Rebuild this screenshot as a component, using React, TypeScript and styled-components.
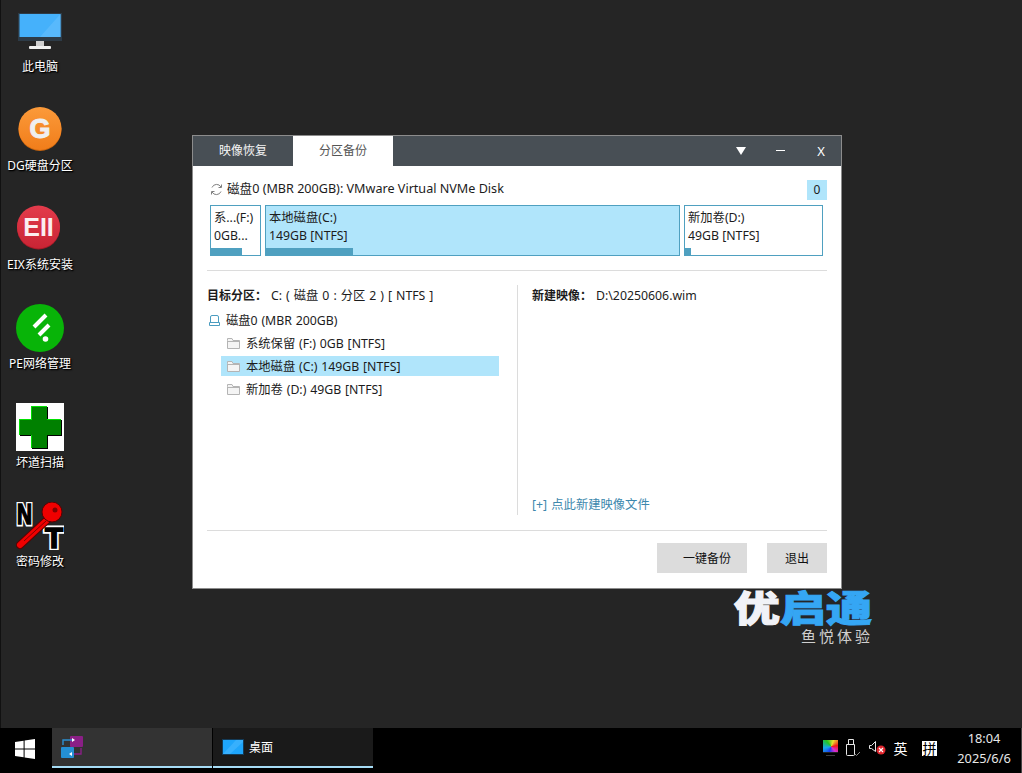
import React from 'react'
import styled, { createGlobalStyle } from 'styled-components'

const GlobalStyle = createGlobalStyle`
  html, body {
    margin: 0;
    padding: 0;
    height: 100%;
    overflow: hidden;
    background: #252525;
    font-family: "Noto Sans", "Noto Sans CJK SC", sans-serif;
    font-size: 12.3px;
  }
`

const Screen = styled.div`
  width: 1022px;
  height: 773px;
  display: flex;
  flex-direction: column;
  box-sizing: border-box;
  border-left: 1px solid #111;
`

const Desktop = styled.div`
  position: relative;
  flex: 1;
  display: flex;
  flex-direction: column;
  padding-top: 7px;
`

const Shortcut = styled.div`
  width: 80px;
  height: 99px;
  margin-left: -1px;
  display: flex;
  flex-direction: column;
  align-items: center;
`

const ShortcutIcon = styled.div`
  width: 48px;
  height: 48px;
  margin-bottom: 3px;
  svg {
    display: block;
  }
`

const ShortcutLabel = styled.div`
  height: 18px;
  line-height: 18px;
  padding: 0 2px;
  color: #fff;
  font-size: 12px;
  white-space: nowrap;
  text-shadow: 1px 1px 2px #000, 1px 1px 1px #000;
`

const Brand = styled.div`
  position: absolute;
  left: 719px;
  top: 588px;
  width: 152px;
  text-align: right;
`

const BrandName = styled.div`
  font-family: "Noto Sans CJK SC", sans-serif;
  font-weight: 900;
  font-size: 36px;
  line-height: 36px;
  color: #f1f2f7;
  white-space: nowrap;
  -webkit-text-stroke: 1px currentColor;
  transform: scaleX(1.28);
  transform-origin: right top;
  span {
    color: #35a6f4;
  }
`

const BrandSlogan = styled.div`
  font-family: "Noto Sans CJK SC", sans-serif;
  font-size: 15px;
  line-height: 20px;
  letter-spacing: 3px;
  margin-top: 2px;
  margin-right: -1px;
  color: #cfcfcf;
`

const Window = styled.div`
  position: absolute;
  left: 191px;
  top: 135px;
  width: 650px;
  height: 454px;
  box-sizing: border-box;
  border: 1px solid #8c8c8c;
  background: #fff;
  display: flex;
  flex-direction: column;
  color: #1c1c1c;
`

const TitleBar = styled.div`
  height: 30px;
  flex: none;
  background: #484f55;
  display: flex;
  align-items: stretch;
`

const Tab = styled.div<{ $active?: boolean }>`
  width: 100px;
  display: flex;
  align-items: center;
  justify-content: center;
  padding-bottom: 2px;
  box-sizing: border-box;
  font-size: 12px;
  background: ${(p) => (p.$active ? '#fff' : 'transparent')};
  color: ${(p) => (p.$active ? '#555' : '#f4f4f4')};
`

const WindowControls = styled.div`
  margin-left: auto;
  display: flex;
  color: #fff;
`

const WindowControl = styled.div`
  width: 40px;
  display: flex;
  align-items: center;
  justify-content: center;
  padding-bottom: 1px;
  box-sizing: border-box;
  font-size: 13px;
`

const DropArrow = styled.span`
  width: 0;
  height: 0;
  border-left: 5px solid transparent;
  border-right: 5px solid transparent;
  border-top: 8px solid #fff;
`

const MinimizeBar = styled.span`
  width: 9px;
  height: 1px;
  margin-right: 2px;
  background: #fff;
`

const Content = styled.div`
  flex: 1;
  display: flex;
  flex-direction: column;
  padding: 0 14px 0 14px;
`

const DiskHeader = styled.div`
  height: 39px;
  display: flex;
  align-items: flex-start;
  padding: 15px 0 0 3px;
  box-sizing: border-box;
  font-size: 12.6px;
  line-height: 16px;
`

const RefreshIcon = styled.span`
  width: 13px;
  height: 16px;
  display: flex;
  align-items: center;
  margin-right: 4px;
`

const DiskBadge = styled.div`
  margin-left: auto;
  margin-top: -1px;
  width: 20px;
  height: 20px;
  background: #b0e5fb;
  display: flex;
  align-items: center;
  justify-content: center;
  font-size: 12px;
`

const PartitionRow = styled.div`
  display: flex;
  gap: 4px;
  height: 51px;
  padding-left: 3px;
  margin-right: 4px;
`

const Partition = styled.div<{ $width: number; $selected?: boolean }>`
  position: relative;
  width: ${(p) => p.$width}px;
  box-sizing: border-box;
  border: 1px solid #4fa0c0;
  background: ${(p) => (p.$selected ? '#b0e5fb' : '#fff')};
  padding: 3px 0 0 3px;
  font-size: 12.3px;
  line-height: 18px;
  white-space: nowrap;
  overflow: hidden;
`

const UsageBar = styled.div`
  position: absolute;
  left: 0;
  bottom: 0;
  height: 7px;
  background: #4fa0c0;
`

const Divider = styled.div`
  height: 1px;
  background: #dcdcdc;
  flex: none;
`

const TopDivider = styled(Divider)`
  margin-top: 14px;
`

const Panels = styled.div`
  height: 230px;
  margin-top: 14px;
  margin-bottom: 15px;
  display: flex;
`

const LeftPanel = styled.div`
  width: 310px;
  flex: none;
`

const InfoLine = styled.div`
  height: 20px;
  line-height: 22px;
  font-size: 12.3px;
  word-spacing: 0.8px;
  strong {
    font-weight: 700;
    font-size: 12px;
  }
`

const Tree = styled.div`
  margin-top: 5px;
  display: flex;
  flex-direction: column;
  gap: 3px;
`

const TreeRow = styled.div<{ $selected?: boolean; $child?: boolean }>`
  height: 20px;
  display: flex;
  align-items: center;
  margin-left: ${(p) => (p.$child ? '14px' : '0')};
  width: ${(p) => (p.$child ? '278px' : 'auto')};
  padding-left: ${(p) => (p.$child ? '6px' : '2px')};
  box-sizing: border-box;
  background: ${(p) => (p.$selected ? '#b0e5fb' : 'transparent')};
  font-size: 12.3px;
  word-spacing: 0.6px;
  white-space: nowrap;
  svg {
    flex: none;
    margin-right: 6px;
  }
`

const RightPanel = styled.div`
  flex: 1;
  border-left: 1px solid #dcdcdc;
  padding-left: 14px;
  display: flex;
  flex-direction: column;
  justify-content: space-between;
`

const NewImageLink = styled.div`
  color: #3d88ad;
  font-size: 12.3px;
  word-spacing: 1px;
  line-height: 18px;
  margin-bottom: 1px;
`

const Footer = styled.div`
  display: flex;
  justify-content: flex-end;
  gap: 20px;
  margin-top: 12px;
`

const ActionButton = styled.div<{ $width: number; $indent?: number }>`
  width: ${(p) => p.$width}px;
  height: 30px;
  box-sizing: border-box;
  padding-left: ${(p) => p.$indent ?? 0}px;
  background: #dcdcdc;
  display: flex;
  align-items: center;
  justify-content: center;
  font-size: 12px;
  color: #111;
`

const Taskbar = styled.div`
  height: 45px;
  flex: none;
  margin-left: -1px;
  background: #000;
  display: flex;
  color: #fff;
`

const StartButton = styled.div`
  width: 52px;
  height: 40px;
  display: flex;
  align-items: center;
  justify-content: center;
  padding: 1px 2px 0 0;
  box-sizing: border-box;
`

const TaskItem = styled.div<{ $active?: boolean }>`
  width: 160px;
  height: 40px;
  margin-right: 1px;
  box-sizing: border-box;
  border-bottom: 2px solid #a6dcf5;
  background: ${(p) => (p.$active ? '#333333' : '#1a1a1a')};
  display: flex;
  align-items: center;
  gap: 5px;
  padding-left: ${(p) => (p.$active ? '8px' : '9px')};
  font-size: 12px;
`

const Tray = styled.div`
  margin-left: auto;
  display: flex;
  align-items: center;
  height: 40px;
`

const TrayIcon = styled.div<{ $width: number }>`
  width: ${(p) => p.$width}px;
  height: 24px;
  display: flex;
  align-items: center;
  justify-content: center;
`

const TrayText = styled.div`
  width: 21px;
  text-align: center;
  font-size: 14px;
  font-family: "Noto Sans CJK SC", sans-serif;
`

const MonitorBody = styled.div`
  width: 15px;
  height: 16px;
  display: flex;
  flex-direction: column;
  align-items: center;
`

const MonitorScreen = styled.div`
  width: 15px;
  height: 12px;
  border-bottom: 1px solid #222;
  background: conic-gradient(from 200deg at 55% 55%, #1b3cf0, #18a8e8, #22c422, #e8e030, #f01818, #d72fd0, #1b3cf0);
`

const MonitorStand = styled.div`
  width: 9px;
  height: 1px;
  margin-top: 2px;
  background: #3c3c3c;
`

const Clock = styled.div`
  width: 72px;
  text-align: center;
  font-size: 12.8px;
  line-height: 20px;
  color: #e8e8e8;
  margin-top: -1px;
`

const TrayEdge = styled.div`
  width: 1px;
  height: 45px;
  margin-left: 1px;
  margin-top: 5px;
  background: #444;
`

const ImeBox = styled.div`
  width: 15px;
  height: 15px;
  background: #fff;
  color: #000;
  font-size: 14px;
  line-height: 14px;
  text-align: center;
  font-family: "Noto Sans CJK SC", sans-serif;
  overflow: hidden;
`

const MonitorIcon = () => (
  <svg width="48" height="48" viewBox="0 0 48 48">
    <rect x="2" y="6" width="44" height="28" fill="#2d3b47" />
    <rect x="3.5" y="7" width="41" height="23" fill="#45b1fb" />
    <path d="M24 30 L44.5 7 V30 Z" fill="#5cbcfd" opacity="0.8" />
    <rect x="20" y="34" width="8" height="5" fill="#cfcfcf" />
    <rect x="13" y="39" width="22" height="3" rx="1" fill="#f0f0f0" />
  </svg>
)

const OrbG = () => (
  <svg width="48" height="48" viewBox="0 0 48 48">
    <defs>
      <linearGradient id="orbG" x1="0" y1="0" x2="0" y2="1">
        <stop offset="0" stopColor="#fb9a3a" />
        <stop offset="1" stopColor="#f17d1a" />
      </linearGradient>
    </defs>
    <circle cx="24" cy="23.5" r="21.5" fill="#c8650f" />
    <circle cx="24" cy="22.5" r="21.5" fill="url(#orbG)" />
    <text x="24" y="32" textAnchor="middle" fontFamily="Liberation Sans" fontWeight="700" fontSize="27" fill="#efefef" stroke="#efefef" strokeWidth="1">G</text>
  </svg>
)

const OrbEII = () => (
  <svg width="48" height="48" viewBox="0 0 48 48">
    <defs>
      <linearGradient id="orbE" x1="0" y1="0" x2="0" y2="1">
        <stop offset="0" stopColor="#e33b4b" />
        <stop offset="1" stopColor="#c92434" />
      </linearGradient>
    </defs>
    <circle cx="22.5" cy="23" r="21.5" fill="#a51a27" />
    <circle cx="22.5" cy="22" r="21.5" fill="url(#orbE)" />
    <text x="22.5" y="31" textAnchor="middle" fontFamily="Liberation Sans" fontWeight="700" fontSize="25" fill="#fbeef0">EII</text>
  </svg>
)

const OrbNetwork = () => (
  <svg width="48" height="48" viewBox="0 0 48 48">
    <circle cx="24" cy="24" r="24" fill="#08b408" />
    <path d="M18 23 L30 11" stroke="#fff" strokeWidth="4" />
    <path d="M23 31 L33 21" stroke="#fff" strokeWidth="4" />
    <circle cx="29.5" cy="35" r="2.8" fill="#fff" />
  </svg>
)

const crossPath = 'M15 3 H31 V16 H45 V32 H31 V45 H15 V32 H3 V16 H15 Z'

const PlusIcon = () => (
  <svg width="48" height="48" viewBox="0 0 48 48" shapeRendering="crispEdges">
    <rect width="48" height="48" fill="#fff" />
    <path d={crossPath} fill="#000" transform="translate(1 1)" />
    <path d={crossPath} fill="#00e000" />
    <path d="M16 4 H31 V17 H45 V32 H31 V45 H16 V32 H4 V17 H16 Z" fill="#008000" />
  </svg>
)

const KeyIcon = () => (
  <svg width="48" height="48" viewBox="0 0 48 48">
    <text x="1" y="22" textLength="15" lengthAdjust="spacingAndGlyphs" fontFamily="Liberation Sans" fontWeight="700" fontSize="29" fill="#fff" stroke="#fff" strokeWidth="5">N</text>
    <text x="1" y="22" textLength="15" lengthAdjust="spacingAndGlyphs" fontFamily="Liberation Sans" fontWeight="700" fontSize="29" fill="#000" stroke="#000" strokeWidth="1.6">N</text>
    <text x="29" y="46" textLength="18" lengthAdjust="spacingAndGlyphs" fontFamily="Liberation Sans" fontWeight="700" fontSize="29" fill="#fff" stroke="#fff" strokeWidth="5">T</text>
    <text x="29" y="46" textLength="18" lengthAdjust="spacingAndGlyphs" fontFamily="Liberation Sans" fontWeight="700" fontSize="29" fill="#000" stroke="#000" strokeWidth="1.6">T</text>
    <path d="M31 18 L4 43" stroke="#5a0000" strokeWidth="8" strokeLinecap="round" />
    <path d="M31 18 L4 43" stroke="#f00000" strokeWidth="6" strokeLinecap="round" />
    <path d="M30 19 L8 39" stroke="#800000" strokeWidth="1" />
    <circle cx="36" cy="10" r="10" fill="#f00000" stroke="#5a0000" strokeWidth="1" />
    <circle cx="39" cy="8" r="2.5" fill="#800000" />
  </svg>
)

const WindowsLogo = () => (
  <svg width="20" height="20" viewBox="0 0 20 20">
    <path d="M0 3 L8.6 1.8 V9.4 H0 Z M9.6 1.6 L20 0 V9.4 H9.6 Z M0 10.5 H8.6 V18.2 L0 17 Z M9.6 10.5 H20 V20 L9.6 18.4 Z" fill="#fff" />
  </svg>
)

const TransferIcon = () => (
  <svg width="24" height="24" viewBox="0 0 24 24">
    <rect x="10" y="1" width="13" height="11" rx="1" fill="#8a1f86" />
    <path d="M3 10 V5 H14" stroke="#2c8fd0" strokeWidth="1.4" fill="none" />
    <path d="M12 3 L15 5 L12 7 Z" fill="#fff" />
    <path d="M21 13 V19 H10" stroke="#8a1f86" strokeWidth="1.4" fill="none" />
    <rect x="1" y="12" width="13" height="11" rx="1" fill="#2490d4" />
    <path d="M12 17 L9 19 L12 21 Z" fill="#fff" />
  </svg>
)

const DesktopThumb = () => (
  <svg width="22" height="16" viewBox="0 0 22 16">
    <rect width="22" height="16" fill="#133b58" />
    <rect x="1" y="1" width="20" height="14" fill="#1ea5fb" />
    <path d="M1 15 L14 1 H21 V3 L8 15 Z" fill="#47b8ff" opacity="0.6" />
  </svg>
)

const RefreshGlyph = () => (
  <svg width="13" height="13" viewBox="0 0 13 13" fill="none" stroke="#808080" strokeWidth="1">
    <path d="M2 4.5 A5 5 0 0 1 11 4" />
    <path d="M11 8.5 A5 5 0 0 1 2 9" />
    <path d="M11.5 1.5 V4.5 H8.5" />
    <path d="M1.5 11.5 V8.5 H4.5" />
  </svg>
)

const DiskGlyph = () => (
  <svg width="11" height="11" viewBox="0 0 11 11" fill="none" stroke="#4b9cc0" strokeWidth="1">
    <path d="M1.5 7.5 V2 Q1.5 0.5 3 0.5 H8 Q9.5 0.5 9.5 2 V7.5" />
    <path d="M0.5 7.5 H10.5 V10.5 H0.5 Z" />
  </svg>
)

const FolderGlyph = () => (
  <svg width="13" height="11" viewBox="0 0 13 11" fill="#f4f4f4" stroke="#b4b4b4" strokeWidth="1">
    <path d="M0.5 2.5 V0.5 H5 L6 2.5 H12.5 V10.5 H0.5 Z" />
    <path d="M0.5 3.5 H12.5" />
  </svg>
)

const UsbGlyph = () => (
  <svg width="15" height="18" viewBox="0 0 15 18" fill="none" stroke="#e6e6e6" strokeWidth="1">
    <path d="M2.5 0.5 H7.5 V5.5 H2.5 Z" />
    <path d="M0.5 5.5 H8.5 V15.5 Q8.5 16.5 7.5 16.5 H1.5 Q0.5 16.5 0.5 15.5 Z" />
    <path d="M9 15 L10.5 16.5 L14 13" stroke="#8a8a8a" />
  </svg>
)

const MutedSpeaker = () => (
  <svg width="17" height="16" viewBox="0 0 17 16">
    <path d="M0.5 5.5 H2.5 L6.5 1.5 V11.5 L2.5 8.5 H0.5 Z" fill="none" stroke="#e6e6e6" strokeWidth="1" />
    <circle cx="12" cy="10" r="4.5" fill="#e0262e" />
    <path d="M10 8 L14 12 M14 8 L10 12" stroke="#fff" strokeWidth="1.2" />
  </svg>
)

const shortcuts = [
  { label: '此电脑', icon: <MonitorIcon /> },
  { label: 'DG硬盘分区', icon: <OrbG /> },
  { label: 'EIX系统安装', icon: <OrbEII /> },
  { label: 'PE网络管理', icon: <OrbNetwork /> },
  { label: '坏道扫描', icon: <PlusIcon /> },
  { label: '密码修改', icon: <KeyIcon /> },
]

const partitions = [
  { name: '系...(F:)', info: '0GB...', width: 51, used: 31 },
  { name: '本地磁盘(C:)', info: '149GB [NTFS]', width: 415, used: 87, selected: true },
  { name: '新加卷(D:)', info: '49GB [NTFS]', width: 139, used: 6 },
]

const volumes = [
  { label: '系统保留 (F:) 0GB [NTFS]' },
  { label: '本地磁盘 (C:) 149GB [NTFS]', selected: true },
  { label: '新加卷 (D:) 49GB [NTFS]' },
]

const App: React.FC = () => (
  <Screen>
    <GlobalStyle />
    <Desktop>
      {shortcuts.map((s) => (
        <Shortcut key={s.label}>
          <ShortcutIcon>{s.icon}</ShortcutIcon>
          <ShortcutLabel>{s.label}</ShortcutLabel>
        </Shortcut>
      ))}

      <Brand>
        <BrandName>
          优<span>启通</span>
        </BrandName>
        <BrandSlogan>鱼悦体验</BrandSlogan>
      </Brand>

      <Window>
        <TitleBar>
          <Tab>映像恢复</Tab>
          <Tab $active>分区备份</Tab>
          <WindowControls>
            <WindowControl>
              <DropArrow />
            </WindowControl>
            <WindowControl>
              <MinimizeBar />
            </WindowControl>
            <WindowControl>X</WindowControl>
          </WindowControls>
        </TitleBar>
        <Content>
          <DiskHeader>
            <RefreshIcon>
              <RefreshGlyph />
            </RefreshIcon>
            磁盘0 (MBR 200GB): VMware Virtual NVMe Disk
            <DiskBadge>0</DiskBadge>
          </DiskHeader>
          <PartitionRow>
            {partitions.map((p) => (
              <Partition key={p.name} $width={p.width} $selected={p.selected}>
                {p.name}
                <br />
                {p.info}
                <UsageBar style={{ width: p.used }} />
              </Partition>
            ))}
          </PartitionRow>
          <TopDivider />
          <Panels>
            <LeftPanel>
              <InfoLine>
                <strong>目标分区：</strong> C: ( 磁盘 0 : 分区 2 ) [ NTFS ]
              </InfoLine>
              <Tree>
                <TreeRow>
                  <DiskGlyph />
                  磁盘0 (MBR 200GB)
                </TreeRow>
                {volumes.map((v) => (
                  <TreeRow key={v.label} $child $selected={v.selected}>
                    <FolderGlyph />
                    {v.label}
                  </TreeRow>
                ))}
              </Tree>
            </LeftPanel>
            <RightPanel>
              <InfoLine>
                <strong>新建映像：</strong> D:\20250606.wim
              </InfoLine>
              <NewImageLink>[+] 点此新建映像文件</NewImageLink>
            </RightPanel>
          </Panels>
          <Divider />
          <Footer>
            <ActionButton $width={90} $indent={10}>
              一键备份
            </ActionButton>
            <ActionButton $width={60}>退出</ActionButton>
          </Footer>
        </Content>
      </Window>
    </Desktop>

    <Taskbar>
      <StartButton>
        <WindowsLogo />
      </StartButton>
      <TaskItem $active>
        <TransferIcon />
      </TaskItem>
      <TaskItem>
        <DesktopThumb />
        桌面
      </TaskItem>
      <Tray>
        <TrayIcon $width={24}>
          <MonitorBody>
            <MonitorScreen />
            <MonitorStand />
          </MonitorBody>
        </TrayIcon>
        <TrayIcon $width={22}>
          <UsbGlyph />
        </TrayIcon>
        <TrayIcon $width={26}>
          <MutedSpeaker />
        </TrayIcon>
        <TrayText>英</TrayText>
        <TrayIcon $width={37}>
          <ImeBox>拼</ImeBox>
        </TrayIcon>
        <Clock>
          18:04
          <br />
          2025/6/6
        </Clock>
        <TrayEdge />
      </Tray>
    </Taskbar>
  </Screen>
)

export default App
